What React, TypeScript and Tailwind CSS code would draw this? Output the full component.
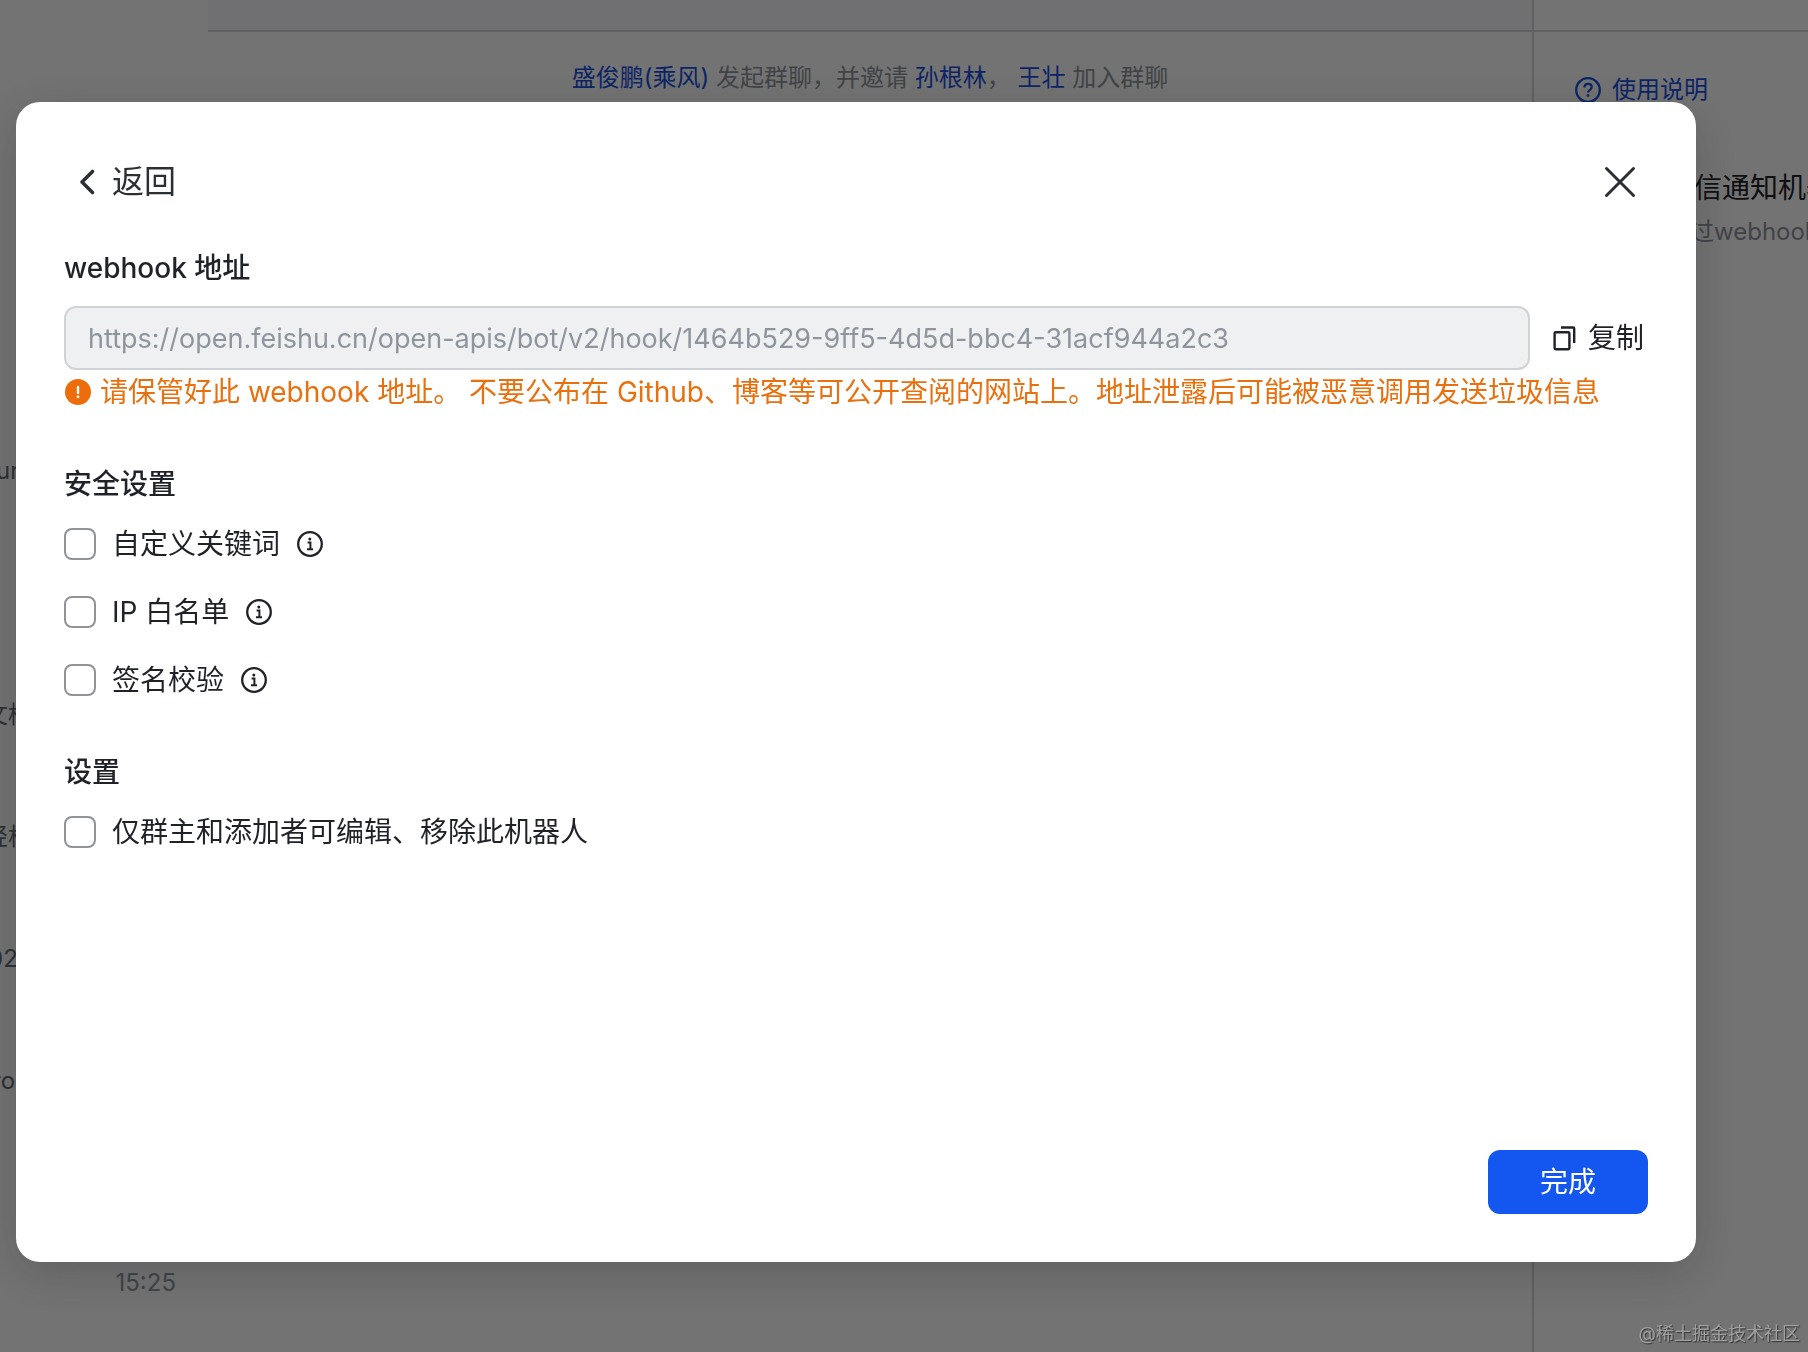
import { useState } from "react";

const securityOptions = [
  { id: "keyword", label: "自定义关键词" },
  { id: "ip", label: "IP 白名单" },
  { id: "sign", label: "签名校验" },
];

function InfoIcon() {
  return (
    <svg width="28" height="28" viewBox="0 0 28 28" fill="none" stroke="#1f2329">
      <circle cx="14" cy="14" r="11.8" strokeWidth="2.3" />
      <circle cx="13.8" cy="8.9" r="1.5" fill="#1f2329" stroke="none" />
      <path d="M11.6 12.600h2.800v6.400M11 19.200h6" strokeWidth="2" />
    </svg>
  );
}

function CheckRow({ id, label, info, checked, onToggle }: any) {
  return (
    <div className="flex items-center h-11">
      <input
        id={id}
        type="checkbox"
        checked={checked}
        onChange={() => onToggle(id)}
        className="appearance-none w-8 h-8 rounded-lg border-2 border-[#909398] bg-white checked:bg-[#1456f0]"
      />
      <label htmlFor={id} className="pl-4 text-[28px] leading-11">
        {label}
      </label>
      {info && (
        <button type="button" aria-label="info" className="ml-4">
          <InfoIcon />
        </button>
      )}
    </div>
  );
}

function Background() {
  return (
    <div className="flex h-screen overflow-hidden bg-white text-2xl text-[#646a73]">
      <aside className="w-52 shrink-0 whitespace-nowrap">
        <ul className="pt-[410px]">
          <li className="flex items-center h-[122px]">
            <span className="-ml-1">ur</span>
          </li>
          <li className="h-[122px]"></li>
          <li className="flex items-center h-[122px]">
            <span className="-ml-4">文档</span>
          </li>
          <li className="flex items-center h-[122px]">
            <span className="-ml-4">轻松</span>
          </li>
          <li className="flex items-center h-[122px]">
            <span className="-ml-3">02</span>
          </li>
          <li className="flex items-center h-[122px]">
            <span className="-ml-2">ro</span>
          </li>
        </ul>
        <time className="block pt-[125px] pr-8 text-right leading-8 text-[#8f959e]">
          15:25
        </time>
      </aside>
      <main className="flex-1">
        <div className="h-8 bg-[#f8f9fd] border-b-2 border-[#d3d5da]"></div>
        <p className="mt-7 text-center leading-9 text-[#8f959e]">
          <a href="#" className="text-[#1c50e0]">盛俊鹏(乘风)</a> 发起群聊，并邀请{" "}
          <a href="#" className="text-[#1c50e0]">孙根林</a>，{" "}
          <a href="#" className="text-[#1c50e0]">王壮</a> 加入群聊
        </p>
      </main>
      <section className="w-[276px] shrink-0 border-l-2 border-[#d3d5da] whitespace-nowrap">
        <div className="h-8 border-b-2 border-[#d3d5da]"></div>
        <a
          href="#"
          className="flex items-center gap-2.5 mt-10 ml-10 h-9 text-[#1c50e0]"
        >
          <svg width="28" height="28" viewBox="0 0 28 28" fill="none" stroke="currentColor">
            <circle cx="14" cy="14" r="11.8" strokeWidth="2.3" />
            <path
              d="M10.400 11.400c0-2 1.500-3.600 3.700-3.600s3.700 1.400 3.700 3.300c0 2.600-3.700 2.800-3.700 5.500"
              strokeWidth="2.200"
            />
            <circle cx="14" cy="19.600" r="1.400" fill="currentColor" stroke="none" />
          </svg>
          使用说明
        </a>
        <h3 className="mt-15 ml-40 text-[28px] leading-10 text-[#1f2329]">
          信通知机器人
        </h3>
        <p className="mt-2 ml-39 leading-8 text-[#8f959e]">过webhook</p>
      </section>
    </div>
  );
}

function App() {
  const [checked, setChecked] = useState<string[]>([]);
  const url =
    "https://open.feishu.cn/open-apis/bot/v2/hook/1464b529-9ff5-4d5d-bbc4-31acf944a2c3";

  const toggle = (id: string) => {
    setChecked(
      checked.includes(id) ? checked.filter((c) => c !== id) : [...checked, id]
    );
  };

  return (
    <div className="font-[Inter,'Noto_Sans_CJK_SC',sans-serif] text-[#1f2329]">
      <Background />
      <div className="fixed inset-0 flex bg-black/55 pt-[102px] pr-28 pb-[90px] pl-4">
        <div
          role="dialog"
          className="flex flex-col flex-1 rounded-3xl bg-white px-12 pt-14 pb-12 shadow-[0_12px_48px_rgba(31,35,41,0.25)]"
        >
          <header className="flex items-center justify-between h-12">
            <button type="button" className="flex items-center text-[32px] leading-12 text-[#2b2f36]">
              <svg width="48" height="48" viewBox="0 0 48 48" fill="none">
                <path d="M28.500 13.500L18 24l10.500 10.500" stroke="#2b2f36" strokeWidth="3.600" strokeLinecap="round" strokeLinejoin="round" />
              </svg>
              返回
            </button>
            <button type="button" aria-label="close">
              <svg width="56" height="48" viewBox="0 0 56 48" fill="none">
                <path d="M14.500 10.500l27 27M41.500 10.500l-27 27" stroke="#2b2f36" strokeWidth="3" strokeLinecap="round" />
              </svg>
            </button>
          </header>

          <label htmlFor="webhook" className="mt-10 text-[28px] leading-11 font-medium">
            webhook 地址
          </label>
          <div className="flex items-center mt-4">
            <input
              id="webhook"
              value={url}
              readOnly
              className="flex-1 h-16 px-[22px] rounded-xl border-2 border-[#d0d3d6] bg-[#eff0f1] text-[27px] text-[#8f959e] focus:outline-none"
            />
            <button
              type="button"
              onClick={() => navigator.clipboard?.writeText(url)}
              className="flex items-center gap-2.5 ml-5 mr-1 text-[28px] leading-11"
            >
              <svg width="28" height="28" viewBox="0 0 28 28" fill="none" stroke="#1f2329" strokeWidth="2.400">
                <rect x="4.600" y="8.200" width="14.800" height="17" rx="1.200" />
                <path d="M11 3.500h12.200a1 1 0 0 1 1 1V19" />
              </svg>
              复制
            </button>
          </div>
          <p className="flex items-center h-11 text-[28px] leading-11 text-[#e8700f]">
            <svg width="28" height="28" viewBox="0 0 28 28" className="mr-2 shrink-0">
              <circle cx="14" cy="14" r="13" fill="#ed6d0c" />
              <path d="M14 9v6" stroke="#fff" strokeWidth="2.400" strokeLinecap="round" />
              <circle cx="14" cy="18.800" r="1.400" fill="#fff" />
            </svg>
            请保管好此 webhook 地址。 不要公布在 Github、博客等可公开查阅的网站上。地址泄露后可能被恶意调用发送垃圾信息
          </p>

          <h2 className="mt-12 text-[28px] leading-11 font-medium">安全设置</h2>
          <div className="flex flex-col gap-6 mt-4">
            {securityOptions.map((o) => (
              <CheckRow
                key={o.id}
                id={o.id}
                label={o.label}
                info
                checked={checked.includes(o.id)}
                onToggle={toggle}
              />
            ))}
          </div>

          <h2 className="mt-12 text-[28px] leading-11 font-medium">设置</h2>
          <div className="mt-4">
            <CheckRow
              id="owner"
              label="仅群主和添加者可编辑、移除此机器人"
              checked={checked.includes("owner")}
              onToggle={toggle}
            />
          </div>

          <button
            type="button"
            className="self-end w-40 h-16 mt-auto rounded-xl bg-[#1456f0] text-[28px] text-white"
          >
            完成
          </button>
        </div>
      </div>
      <span className="fixed right-2 bottom-1 text-lg text-[#a0a0a0] [text-shadow:1px_1px_1px_#333]">
        @稀土掘金技术社区
      </span>
    </div>
  );
}

export default App;
